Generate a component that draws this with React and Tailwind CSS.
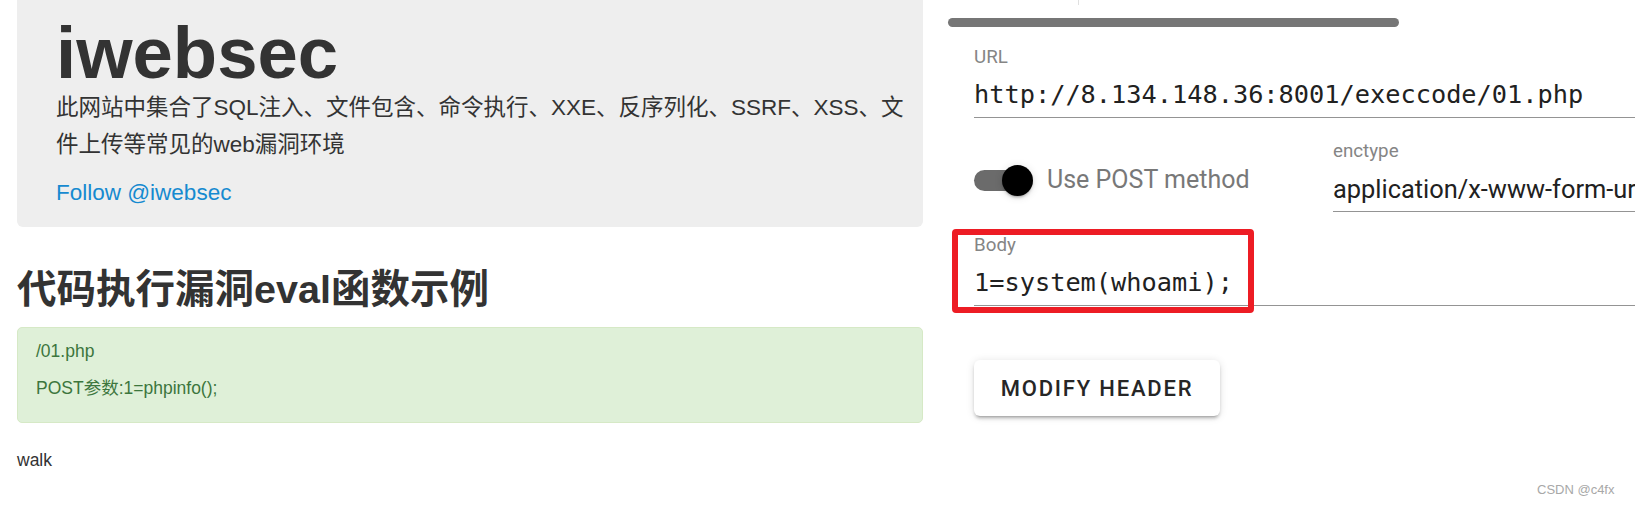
import React from "react";

function Field({ label, value, mono, className = "" }) {
  return (
    <div className={"border-b border-[#949494] pb-[6px] " + className}>
      <div className="font-['Roboto',sans-serif] text-[18.75px] leading-[22px] text-[#858585]">{label}</div>
      <div
        className={
          "mt-[11px] leading-[32px] text-[#212121] whitespace-nowrap " +
          (mono ? "font-['DejaVu_Sans_Mono',monospace] text-[25.3px]" : "font-['Roboto',sans-serif] text-[25.4px]")
        }
      >
        {value}
      </div>
    </div>
  );
}

export default function App() {
  return (
    <div className="relative w-[1635px] h-[506px] overflow-hidden bg-white flex">
      {/* Left column */}
      <div className="w-[923px] shrink-0 pl-[17px] font-['Liberation_Sans','Noto_Sans_CJK_SC',sans-serif] text-[#333333]">
        <div className="bg-[#eeeeee] rounded-b-[6px] pt-[17px] pb-[16px] px-[39px]">
          <h1 className="text-[72.5px] leading-[72px] font-bold text-[#333333]">iwebsec</h1>
          <p className="text-[22.5px] leading-[37px] whitespace-nowrap">
            此网站中集合了SQL注入、文件包含、命令执行、XXE、反序列化、SSRF、XSS、文
            <br />
            件上传等常见的web漏洞环境
          </p>
          <p className="mt-[11px] text-[22.5px] leading-[37px] text-[#168ad0]">Follow @iwebsec</p>
        </div>
        <h2 className="mt-[40px] text-[39.5px] leading-[44px] font-bold text-[#333333]">代码执行漏洞eval函数示例</h2>
        <div className="mt-[16px] bg-[#dff0d8] border border-[#d6e9c6] rounded-[5px] pt-[11px] pb-[21px] px-[18px] text-[#3c763d] text-[17.5px]">
          <p className="leading-[25px]">/01.php</p>
          <p className="mt-[12px] leading-[25px]">POST参数:1=phpinfo();</p>
        </div>
        <p className="mt-[25px] text-[17.5px] leading-[25px]">walk</p>
      </div>

      {/* Right column */}
      <div className="relative flex-1 overflow-hidden">
        <div className="h-[5px]">
          <div className="ml-[155px] w-px h-full bg-[#e0e0e0]" />
        </div>
        <div className="mt-[13px] ml-[25px] w-[451px] h-[9px] rounded-full bg-[#767676]" />

        <div className="pl-[51px]">
          <Field className="mt-[19px]" label="URL" value="http://8.134.148.36:8001/execcode/01.php" mono />

          <div className="mt-[22px] flex items-start">
            <div className="w-[359px] shrink-0 mt-[24px] flex items-center h-[32px]">
              <div className="relative w-[60px] h-[31px] shrink-0">
                <div className="absolute left-0 top-[5px] w-[56px] h-[21px] rounded-full bg-[#6b6b6b]" />
                <div className="absolute left-[28px] top-0 w-[31px] h-[31px] rounded-full bg-black shadow-[0_3px_2px_-2px_rgba(0,0,0,0.2),0_2px_3px_0_rgba(0,0,0,0.14),0_1px_8px_0_rgba(0,0,0,0.12)]" />
              </div>
              <span className="ml-[13px] font-['Roboto',sans-serif] text-[25px] leading-[32px] text-[#787878] whitespace-nowrap">
                Use POST method
              </span>
            </div>
            <Field className="flex-1 min-w-0" label="enctype" value="application/x-www-form-urlencoded" />
          </div>

          <Field className="mt-[22px]" label="Body" value="1=system(whoami);" mono />

          <button className="mt-[54px] w-[246px] h-[56px] flex items-center justify-center rounded-[6px] bg-white font-['Roboto',sans-serif] font-medium text-[22px] tracking-[1.8px] text-[#262626] shadow-[0_4px_2px_-3px_rgba(0,0,0,0.2),0_3px_3px_0_rgba(0,0,0,0.14),0_1px_8px_0_rgba(0,0,0,0.12)]">
            MODIFY HEADER
          </button>
        </div>

        {/* red annotation box */}
        <div className="absolute left-[29px] top-[229px] w-[302px] h-[84px] border-[6px] border-[#ed1c24] rounded-[4px] pointer-events-none" />
      </div>

      <div className="absolute left-[1537px] top-[482px] text-[13px] leading-[16px] text-[#a8a8a8] font-['Liberation_Sans',sans-serif]">
        CSDN @c4fx
      </div>
    </div>
  );
}
